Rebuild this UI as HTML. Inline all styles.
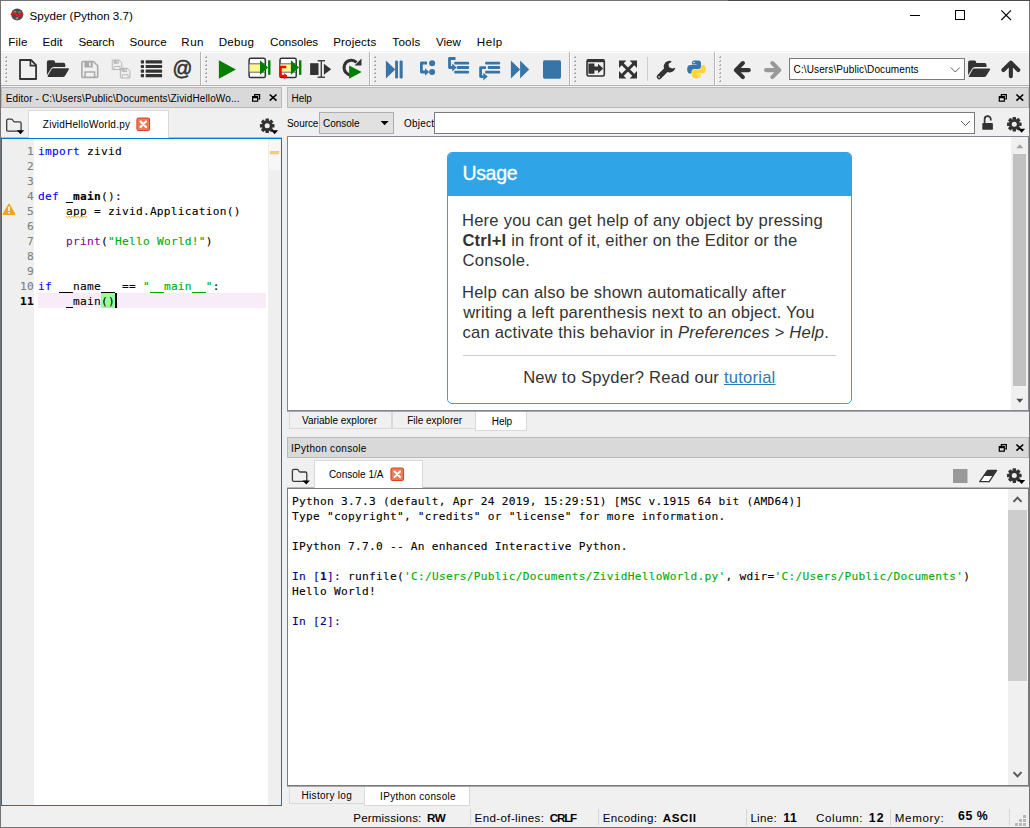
<!DOCTYPE html>
<html><head><meta charset="utf-8"><title>Spyder (Python 3.7)</title>
<style>
*{box-sizing:border-box;margin:0;padding:0}
html,body{width:1030px;height:828px;overflow:hidden;background:#f0f0f0}
body{position:relative;font-family:"Liberation Sans",sans-serif;font-size:12px;color:#000}
div,span,svg{position:absolute}
b,i,u{font-weight:normal;font-style:normal}
.t{white-space:pre;line-height:16px;height:16px;font-size:11.6px}
.s{white-space:pre;line-height:14px;height:14px;font-size:10px}
.h{white-space:pre;line-height:20px;height:20px;font-size:16.6px}
#win{left:0;top:0;width:1030px;height:828px;border:1px solid #737373;background:#f0f0f0}
#titlebar{left:1px;top:1px;width:1028px;height:30px;background:#fff}
#menubar{left:1px;top:31px;width:1028px;height:21px;background:#fff}
.dock{height:21px;background:#d9d9d9;border:1px solid #bababa}
.frame{background:#fff;border:1px solid #828790}
.tab{background:#f0f0f0;border:1px solid #d9d9d9;border-top:none;height:17px}
.tabsel{background:#fff;border:1px solid #d9d9d9;border-bottom:none}
.mono{-webkit-text-stroke:0.1px currentColor;font-family:"DejaVu Sans Mono","Liberation Mono",monospace;font-size:11.2px;letter-spacing:0.257px;line-height:15px;height:15px;white-space:pre}
.ln{color:#808080;text-align:right;width:28px;left:6px}
.kw{color:#0000ff}.st{color:#00aa00}.bi{color:#900090}.pr{color:#000080}
</style></head>
<body>
<div id="win"></div>
<div id="titlebar"></div>
<div id="menubar"></div>
<span class="t" style="left:29.6px;top:8px;letter-spacing:0.006px;">Spyder (Python 3.7)</span><span class="t" style="left:8.3px;top:34px;letter-spacing:0.150px;">File</span><span class="t" style="left:42.4px;top:34px;letter-spacing:0.067px;">Edit</span><span class="t" style="left:78.5px;top:34px;letter-spacing:-0.180px;">Search</span><span class="t" style="left:129.5px;top:34px;letter-spacing:0.090px;">Source</span><span class="t" style="left:181.3px;top:34px;letter-spacing:0.500px;">Run</span><span class="t" style="left:218.7px;top:34px;letter-spacing:0.275px;">Debug</span><span class="t" style="left:270.1px;top:34px;letter-spacing:-0.043px;">Consoles</span><span class="t" style="left:333.2px;top:34px;letter-spacing:0.171px;">Projects</span><span class="t" style="left:392.35px;top:34px;letter-spacing:0.250px;">Tools</span><span class="t" style="left:436px;top:34px;letter-spacing:0.000px;">View</span><span class="t" style="left:476.7px;top:34px;letter-spacing:0.583px;">Help</span>
<div style="left:1px;top:51px;width:1028px;height:1px;background:#f2f2f2"></div><div style="left:1px;top:52px;width:1028px;height:1px;background:#fff"></div>
<div style="left:1px;top:85px;width:1028px;height:1px;background:#b4b4b4"></div>
<span class="t" style="left:172.55px;top:55.3px;-webkit-text-stroke:0.55px #333;font-size:19.6px;line-height:26px;height:26px;color:#333;">@</span><div style="left:789px;top:58px;width:176px;height:22px;background:#fff;border:1px solid #7a7a7a"></div><span class="s" style="left:793.6px;top:63px;letter-spacing:0.112px;">C:\Users\Public\Documents</span>

<div class="dock" style="left:1px;top:87px;width:281px"></div>
<span class="s" style="left:5.75px;top:92px;letter-spacing:0.137px;">Editor - C:\Users\Public\Documents\ZividHelloWo...</span>
<div style="left:1px;top:137px;width:281px;height:1px;background:#b8b8b8"></div>
<div class="tabsel" style="left:28px;top:110px;width:141px;height:28px"></div>
<span class="s" style="left:42.85px;top:118px;letter-spacing:0.232px;">ZividHelloWorld.py</span>
<div id="editor" style="left:1px;top:138px;width:281px;height:668px;background:#fff;border:1px solid #0078d7">
  <div style="left:0;top:0;width:32px;height:666px;background:#efefef"></div>
  <div style="left:266px;top:0;width:13px;height:666px;background:#efefef"></div>
</div>
<div style="left:38px;top:293px;width:228px;height:15px;background:#f7ecf8"></div>
<div style="left:101px;top:293px;width:14px;height:15px;background:#99ff99"></div>
<div style="left:115px;top:293px;width:2px;height:15px;background:#000"></div>
<span class="mono ln" style="top:144px">1</span><span class="mono ln" style="top:159px">2</span><span class="mono ln" style="top:174px">3</span><span class="mono ln" style="top:189px">4</span><span class="mono ln" style="top:204px">5</span><span class="mono ln" style="top:219px">6</span><span class="mono ln" style="top:234px">7</span><span class="mono ln" style="top:249px">8</span><span class="mono ln" style="top:264px">9</span><span class="mono ln" style="top:279px">10</span><span class="mono ln" style="top:294px;color:#000;font-weight:bold">11</span><span class="mono" style="left:38px;top:144px"><b class="kw">import</b> zivid</span><span class="mono" style="left:38px;top:189px"><b class="kw">def</b> <b style="font-weight:bold">_main</b>():</span><span class="mono" style="left:38px;top:204px">    app = zivid.Application()</span><span class="mono" style="left:38px;top:234px">    <b class="bi">print</b>(<b class="st">"Hello World!"</b>)</span><span class="mono" style="left:38px;top:279px"><b class="kw">if</b> __name__ == <b class="st">"__main__"</b>:</span><span class="mono" style="left:38px;top:294px">    _main()</span>

<div class="dock" style="left:287px;top:87px;width:742px"></div>
<span class="s" style="left:291.55px;top:92px;letter-spacing:-0.100px;">Help</span><span class="s" style="left:287px;top:117px;letter-spacing:-0.050px;">Source</span>
<div style="left:319px;top:112px;width:75px;height:22px;background:#e1e1e1;border:1px solid #adadad"></div>
<span class="s" style="left:323px;top:117px;letter-spacing:-0.042px;">Console</span><span class="s" style="left:404px;top:117px;letter-spacing:0.250px;">Object</span>
<div style="left:434px;top:112px;width:541px;height:22px;background:#fff;border:1px solid #7a7a7a"></div>
<div class="frame" style="left:287px;top:136px;width:742px;height:275px">
  <div style="left:723px;top:0;width:17px;height:273px;background:#f0f0f0"></div>
  <div style="left:725px;top:17px;width:13px;height:232px;background:#c1c1c1"></div>
</div>
<div id="usage" style="left:447px;top:152px;width:405px;height:252px;background:#fff;border:1px solid #2fa4e7;border-radius:5px;overflow:hidden">
  <div style="left:0;top:0;width:403px;height:43px;background:#2fa4e7"></div>
  <div style="left:15px;top:202px;width:373px;height:1px;background:#ccc"></div>
</div>
<span class="h" style="left:462.45px;top:161.3px;font-size:19.5px;line-height:24px;color:#fff;-webkit-text-stroke:0.3px #fff;letter-spacing:-0.325px;">Usage</span><span class="h" style="left:461.95px;top:211px;color:#333;letter-spacing:0.223px;">Here you can get help of any object by pressing</span><span class="h" style="left:462.45px;top:231px;color:#333;letter-spacing:0.178px;"><b style="font-weight:bold">Ctrl+I</b> in front of it, either on the Editor or the</span><span class="h" style="left:462.45px;top:251px;color:#333;letter-spacing:0.293px;">Console.</span><span class="h" style="left:461.95px;top:283px;color:#333;letter-spacing:0.210px;">Help can also be shown automatically after</span><span class="h" style="left:463.2px;top:303px;color:#333;letter-spacing:0.188px;">writing a left parenthesis next to an object. You</span><span class="h" style="left:462.45px;top:323px;color:#333;letter-spacing:0.207px;">can activate this behavior in <i style="font-style:italic">Preferences &gt; Help</i>.</span><span class="h" style="left:523.15px;top:368px;color:#333;letter-spacing:0.219px;">New to Spyder? Read our <u style="color:#2d7ab5">tutorial</u></span>
<div style="left:287px;top:411px;width:742px;height:1px;background:#a6a6a6"></div>
<div style="left:287px;top:786px;width:742px;height:1px;background:#a6a6a6"></div>
<div style="left:728px;top:0;width:302px;height:1px;background:#4a4a4a"></div>
<div class="tab" style="left:289px;top:412px;width:103px"></div>
<div class="tab" style="left:392px;top:412px;width:85px"></div>
<div class="tabsel" style="left:475px;top:412px;width:52px;height:19px;border:1px solid #d9d9d9;border-top:none"></div>
<span class="s" style="left:301.95px;top:414px;letter-spacing:0.012px;">Variable explorer</span><span class="s" style="left:407.25px;top:414px;letter-spacing:-0.017px;">File explorer</span><span class="s" style="left:491.85px;top:415px;letter-spacing:-0.100px;">Help</span>

<div class="dock" style="left:287px;top:437px;width:742px"></div>
<span class="s" style="left:291px;top:442px;letter-spacing:0.304px;">IPython console</span>
<div style="left:287px;top:487px;width:742px;height:1px;background:#b8b8b8"></div>
<div class="frame" style="left:287px;top:488px;width:742px;height:298px;border-color:#7a7a7a">
  <div style="left:720px;top:0;width:20px;height:296px;background:#f0f0f0"></div>
  <div style="left:720px;top:21px;width:19px;height:171px;background:#cdcdcd"></div>
</div>
<div class="tabsel" style="left:314px;top:460px;width:109px;height:28px"></div>
<span class="s" style="left:328.9px;top:468px;letter-spacing:0.010px;">Console 1/A</span><span class="mono" style="left:292px;top:494px">Python 3.7.3 (default, Apr 24 2019, 15:29:51) [MSC v.1915 64 bit (AMD64)]</span><span class="mono" style="left:292px;top:509px">Type "copyright", "credits" or "license" for more information.</span><span class="mono" style="left:292px;top:539px">IPython 7.7.0 -- An enhanced Interactive Python.</span><span class="mono" style="left:292px;top:569px"><b class="pr">In [</b><b class="pr" style="font-weight:bold">1</b><b class="pr">]:</b> runfile(<b class="st">'C:/Users/Public/Documents/ZividHelloWorld.py'</b>, wdir=<b class="st">'C:/Users/Public/Documents'</b>)</span><span class="mono" style="left:292px;top:584px">Hello World!</span><span class="mono" style="left:292px;top:614px"><b class="pr">In [</b><b class="pr">2</b><b class="pr">]:</b> </span>
<svg width="1030" height="828" viewBox="0 0 1030 828" style="left:0;top:0"><circle cx="17.2" cy="14.6" r="6" fill="#4a4a4a"/><circle cx="15" cy="12" r="1.3" fill="#8a8a8a"/><circle cx="19.6" cy="12.2" r="1.2" fill="#777"/><circle cx="17" cy="18.3" r="1.4" fill="#888"/><path d="M11.3,15 Q13.5,12 16,14.3 T19.5,15.6 T23,13.2" fill="none" stroke="#ee1111" stroke-width="2.2"/><rect x="910" y="15" width="10" height="1" fill="#000"/><rect x="955.5" y="10.5" width="9" height="9" fill="none" stroke="#000" stroke-width="1"/><path d="M1001.3,10.3 L1011,20 M1011,10.3 L1001.3,20" stroke="#000" stroke-width="1.1" fill="none"/><rect x="6" y="56" width="1" height="1" fill="#b4b4b4"/><rect x="5" y="57" width="2" height="1" fill="#a8a8a8"/><rect x="6" y="60" width="1" height="1" fill="#b4b4b4"/><rect x="5" y="61" width="2" height="1" fill="#a8a8a8"/><rect x="6" y="64" width="1" height="1" fill="#b4b4b4"/><rect x="5" y="65" width="2" height="1" fill="#a8a8a8"/><rect x="6" y="68" width="1" height="1" fill="#b4b4b4"/><rect x="5" y="69" width="2" height="1" fill="#a8a8a8"/><rect x="6" y="72" width="1" height="1" fill="#b4b4b4"/><rect x="5" y="73" width="2" height="1" fill="#a8a8a8"/><rect x="6" y="76" width="1" height="1" fill="#b4b4b4"/><rect x="5" y="77" width="2" height="1" fill="#a8a8a8"/><rect x="6" y="80" width="1" height="1" fill="#b4b4b4"/><rect x="5" y="81" width="2" height="1" fill="#a8a8a8"/><rect x="206" y="56" width="1" height="1" fill="#b4b4b4"/><rect x="205" y="57" width="2" height="1" fill="#a8a8a8"/><rect x="206" y="60" width="1" height="1" fill="#b4b4b4"/><rect x="205" y="61" width="2" height="1" fill="#a8a8a8"/><rect x="206" y="64" width="1" height="1" fill="#b4b4b4"/><rect x="205" y="65" width="2" height="1" fill="#a8a8a8"/><rect x="206" y="68" width="1" height="1" fill="#b4b4b4"/><rect x="205" y="69" width="2" height="1" fill="#a8a8a8"/><rect x="206" y="72" width="1" height="1" fill="#b4b4b4"/><rect x="205" y="73" width="2" height="1" fill="#a8a8a8"/><rect x="206" y="76" width="1" height="1" fill="#b4b4b4"/><rect x="205" y="77" width="2" height="1" fill="#a8a8a8"/><rect x="206" y="80" width="1" height="1" fill="#b4b4b4"/><rect x="205" y="81" width="2" height="1" fill="#a8a8a8"/><rect x="375" y="56" width="1" height="1" fill="#b4b4b4"/><rect x="374" y="57" width="2" height="1" fill="#a8a8a8"/><rect x="375" y="60" width="1" height="1" fill="#b4b4b4"/><rect x="374" y="61" width="2" height="1" fill="#a8a8a8"/><rect x="375" y="64" width="1" height="1" fill="#b4b4b4"/><rect x="374" y="65" width="2" height="1" fill="#a8a8a8"/><rect x="375" y="68" width="1" height="1" fill="#b4b4b4"/><rect x="374" y="69" width="2" height="1" fill="#a8a8a8"/><rect x="375" y="72" width="1" height="1" fill="#b4b4b4"/><rect x="374" y="73" width="2" height="1" fill="#a8a8a8"/><rect x="375" y="76" width="1" height="1" fill="#b4b4b4"/><rect x="374" y="77" width="2" height="1" fill="#a8a8a8"/><rect x="375" y="80" width="1" height="1" fill="#b4b4b4"/><rect x="374" y="81" width="2" height="1" fill="#a8a8a8"/><rect x="575" y="56" width="1" height="1" fill="#b4b4b4"/><rect x="574" y="57" width="2" height="1" fill="#a8a8a8"/><rect x="575" y="60" width="1" height="1" fill="#b4b4b4"/><rect x="574" y="61" width="2" height="1" fill="#a8a8a8"/><rect x="575" y="64" width="1" height="1" fill="#b4b4b4"/><rect x="574" y="65" width="2" height="1" fill="#a8a8a8"/><rect x="575" y="68" width="1" height="1" fill="#b4b4b4"/><rect x="574" y="69" width="2" height="1" fill="#a8a8a8"/><rect x="575" y="72" width="1" height="1" fill="#b4b4b4"/><rect x="574" y="73" width="2" height="1" fill="#a8a8a8"/><rect x="575" y="76" width="1" height="1" fill="#b4b4b4"/><rect x="574" y="77" width="2" height="1" fill="#a8a8a8"/><rect x="575" y="80" width="1" height="1" fill="#b4b4b4"/><rect x="574" y="81" width="2" height="1" fill="#a8a8a8"/><rect x="720" y="56" width="1" height="1" fill="#b4b4b4"/><rect x="719" y="57" width="2" height="1" fill="#a8a8a8"/><rect x="720" y="60" width="1" height="1" fill="#b4b4b4"/><rect x="719" y="61" width="2" height="1" fill="#a8a8a8"/><rect x="720" y="64" width="1" height="1" fill="#b4b4b4"/><rect x="719" y="65" width="2" height="1" fill="#a8a8a8"/><rect x="720" y="68" width="1" height="1" fill="#b4b4b4"/><rect x="719" y="69" width="2" height="1" fill="#a8a8a8"/><rect x="720" y="72" width="1" height="1" fill="#b4b4b4"/><rect x="719" y="73" width="2" height="1" fill="#a8a8a8"/><rect x="720" y="76" width="1" height="1" fill="#b4b4b4"/><rect x="719" y="77" width="2" height="1" fill="#a8a8a8"/><rect x="720" y="80" width="1" height="1" fill="#b4b4b4"/><rect x="719" y="81" width="2" height="1" fill="#a8a8a8"/><rect x="200" y="52" width="1" height="33" fill="#b4b4b4"/><rect x="201" y="52" width="1" height="33" fill="#ffffff"/><rect x="369" y="52" width="1" height="33" fill="#b4b4b4"/><rect x="370" y="52" width="1" height="33" fill="#ffffff"/><rect x="569" y="52" width="1" height="33" fill="#b4b4b4"/><rect x="570" y="52" width="1" height="33" fill="#ffffff"/><rect x="714" y="52" width="1" height="33" fill="#b4b4b4"/><rect x="715" y="52" width="1" height="33" fill="#ffffff"/><path d="M20,60 H31 L36.1,65.1 V79 H20 Z" fill="none" stroke="#333333" stroke-width="1.8" stroke-linejoin="round"/><path d="M30.4,60.4 V65.6 H35.8" fill="none" stroke="#333333" stroke-width="1.6"/><g transform="translate(46.9,60.3)" fill="#333333">
<path d="M0,1.8 Q0,0 1.8,0 H6.3 Q8.1,0 8.1,1.8 V2.5 H16.6 Q18.4,2.5 18.4,4.3 V6.6 H6.8 Q5.1,6.6 4.1,8.2 L0,14.9 Z"/>
<path d="M6.3,8 H21.3 Q22.7,8 21.9,9.3 L18.2,15.4 Q17.4,16.7 15.8,16.7 H1.6 Q0.2,16.7 0.9,15.5 L4.5,9.1 Q5.1,8 6.3,8 Z"/>
</g><g transform="translate(81.1,60.7) scale(1.0)" fill="none" stroke="#aaaaaa" stroke-width="1.6" stroke-linejoin="round">
<path d="M1.6,0.8 H12.3 L16.6,5.1 V15.9 Q16.6,16.7 15.8,16.7 H1.6 Q0.8,16.7 0.8,15.9 V1.6 Q0.8,0.8 1.6,0.8 Z"/>
<path d="M3.9,16.4 V11.3 H13.5 V16.4" stroke-width="1.5"/>
<path d="M3.9,1 V6.2 H11 V1" fill="#aaaaaa" stroke-width="1.2"/>
<rect x="7.9" y="1.9" width="1.7" height="3.3" fill="#f0f0f0" stroke="none"/>
</g><g transform="translate(111.8,59.6) scale(0.6)" fill="none" stroke="#b4b4b4" stroke-width="1.6" stroke-linejoin="round">
<path d="M1.6,0.8 H12.3 L16.6,5.1 V15.9 Q16.6,16.7 15.8,16.7 H1.6 Q0.8,16.7 0.8,15.9 V1.6 Q0.8,0.8 1.6,0.8 Z"/>
<path d="M3.9,16.4 V11.3 H13.5 V16.4" stroke-width="1.5"/>
<path d="M3.9,1 V6.2 H11 V1" fill="#b4b4b4" stroke-width="1.2"/>
<rect x="7.9" y="1.9" width="1.7" height="3.3" fill="#f0f0f0" stroke="none"/>
</g><g transform="translate(119.9,67.8) scale(0.61)" fill="none" stroke="#b4b4b4" stroke-width="1.6" stroke-linejoin="round">
<path d="M1.6,0.8 H12.3 L16.6,5.1 V15.9 Q16.6,16.7 15.8,16.7 H1.6 Q0.8,16.7 0.8,15.9 V1.6 Q0.8,0.8 1.6,0.8 Z"/>
<path d="M3.9,16.4 V11.3 H13.5 V16.4" stroke-width="1.5"/>
<path d="M3.9,1 V6.2 H11 V1" fill="#b4b4b4" stroke-width="1.2"/>
<rect x="7.9" y="1.9" width="1.7" height="3.3" fill="#f0f0f0" stroke="none"/>
</g><rect x="140.8" y="60.3" width="3.2" height="3.2" rx="0.5" fill="#333333"/><rect x="145.6" y="60.3" width="16.5" height="3.2" rx="0.6" fill="#333333"/><rect x="140.8" y="64.9" width="3.2" height="3.2" rx="0.5" fill="#333333"/><rect x="145.6" y="64.9" width="16.5" height="3.2" rx="0.6" fill="#333333"/><rect x="140.8" y="69.5" width="3.2" height="3.2" rx="0.5" fill="#333333"/><rect x="145.6" y="69.5" width="16.5" height="3.2" rx="0.6" fill="#333333"/><rect x="140.8" y="74.1" width="3.2" height="3.2" rx="0.5" fill="#333333"/><rect x="145.6" y="74.1" width="16.5" height="3.2" rx="0.6" fill="#333333"/><path d="M218.9,60.3 L235.9,69.5 L218.9,78.7 Z" fill="#008000"/><rect x="249.10000000000002" y="58.3" width="16.2" height="19.2" rx="1.6" fill="#ffffff" stroke="#333333" stroke-width="1.5"/>
<rect x="249.5" y="63.9" width="15" height="8.2" fill="#fff68f"/><path d="M249.10000000000002,63.8 h16.2 M249.10000000000002,72.2 h16.2" stroke="#666" stroke-width="1"/>
<path d="M260.0,60.3 L268.1,67.5 L260.0,74.8 Z" fill="#008000"/>
<rect x="268.1" y="60.3" width="2.4" height="14.5" fill="#008000"/><rect x="280.0" y="58.3" width="16.2" height="19.2" rx="1.6" fill="#ffffff" stroke="#333333" stroke-width="1.5"/>
<rect x="280.4" y="63.9" width="15" height="8.2" fill="#fff68f"/><path d="M280.0,63.8 h16.2 M280.0,72.2 h16.2" stroke="#666" stroke-width="1"/>
<path d="M290.9,60.3 L299.0,67.5 L290.9,74.8 Z" fill="#008000"/>
<rect x="299.0" y="60.3" width="2.4" height="14.5" fill="#008000"/><path d="M286.3,67 H280.6 V76 H284.6" fill="none" stroke="#ff0000" stroke-width="2.4"/><path d="M284.2,72.9 L287.6,76 L284.2,79.2 Z" fill="#ff0000"/><rect x="310.1" y="63.2" width="8.4" height="11.8" fill="#333333"/><path d="M317.6,60.8 H325 M317.6,77.2 H325 M321.3,60.8 V77.2" stroke="#444" stroke-width="1.4" fill="none"/><path d="M323.9,63.7 L331.2,69.2 L323.9,74.8 Z" fill="#333333"/><path d="M356.5,62.4 A7.3,7.3 0 1 0 352.6,74.8" fill="none" stroke="#333333" stroke-width="3"/><path d="M361.5,58.6 V65.6 H354.5 Z" fill="#333333"/><path d="M349.1,65.6 L361.7,72.1 L349.1,78.7 Z" fill="#008000"/><path d="M385.9,60.5 L395.3,69.4 L385.9,78.4 Z" fill="#3775a9"/><rect x="395.1" y="60.5" width="2.9" height="17.9" rx="1.2" fill="#3775a9"/><rect x="399.6" y="60.5" width="3.1" height="17.9" rx="1.2" fill="#3775a9"/><path d="M427,63 H421.4 V72 H425.5" fill="none" stroke="#3775a9" stroke-width="2.8" stroke-linejoin="round"/><path d="M425,68.2 L429.2,72 L425,75.8 Z" fill="#3775a9"/><circle cx="432.1" cy="63.2" r="3" fill="#3775a9"/><circle cx="432.1" cy="72.1" r="3" fill="#3775a9"/><rect x="454.2" y="61.7" width="14.9" height="2.9" rx="1" fill="#3775a9"/><rect x="485.1" y="61.7" width="15.1" height="2.9" rx="1" fill="#3775a9"/><rect x="456.8" y="66.1" width="12.3" height="2.9" rx="1" fill="#3775a9"/><rect x="487.70000000000005" y="66.1" width="12.5" height="2.9" rx="1" fill="#3775a9"/><rect x="454.2" y="70.7" width="14.9" height="2.9" rx="1" fill="#3775a9"/><rect x="485.1" y="70.7" width="15.1" height="2.9" rx="1" fill="#3775a9"/><path d="M455.5,58.5 H449.5 V67.5 H452.6" fill="none" stroke="#3775a9" stroke-width="2.8" stroke-linejoin="round"/><path d="M452.2,63.6 L456.6,67.5 L452.2,71.4 Z" fill="#3775a9"/><path d="M486,67.6 H480.6 V76.6 H483.7" fill="none" stroke="#3775a9" stroke-width="2.8" stroke-linejoin="round"/><path d="M483.3,72.8 L487.7,76.6 L483.3,80.4 Z" fill="#3775a9"/><path d="M510.9,60.5 L520.1,69.4 L510.9,78.4 Z M520.1,60.5 L529.2,69.4 L520.1,78.4 Z" fill="#3775a9"/><rect x="543" y="60.3" width="18" height="18.4" rx="1.6" fill="#3775a9"/><rect x="587" y="59.9" width="17.3" height="16.1" rx="1.6" fill="none" stroke="#333333" stroke-width="1.6"/><rect x="587" y="59.6" width="17.3" height="2.6" fill="#333333"/><path d="M588.4,63.4 H594.4 V66.6 H598 V63.7 L603.3,68.5 L598,73.3 V70.4 H594.4 V73.8 H588.4 Z" fill="#333333"/><path d="M622,63.5 L634,75.5 M634,63.5 L622,75.5" stroke="#333333" stroke-width="3" fill="none"/><path d="M619,60.5 H626.4 L619,67.9 Z M637,60.5 V67.9 L629.6,60.5 Z M619,78.5 V71.1 L626.4,78.5 Z M637,78.5 H629.6 L637,71.1 Z" fill="#333333"/><rect x="647" y="57" width="1" height="24" fill="#cccccc"/><path d="M659.2,76.8 L667.5,68.5" stroke="#333333" stroke-width="5" stroke-linecap="round" fill="none"/><circle cx="669.6" cy="66.6" r="5.9" fill="#333333"/><path d="M669.3,66.9 L672.5,58.5 L680,62 L677.5,67.5 L672,68.5 Z" fill="#f0f0f0"/><circle cx="671.2" cy="65" r="2.6" fill="#f0f0f0"/><circle cx="659.1" cy="76.9" r="0.8" fill="#f0f0f0"/><g transform="translate(687.2,60.4) scale(0.1675,0.159)"><path d="M54.918785,0.00091927421 C50.335132,0.02221727 45.957846,0.41313697 42.106285,1.0946693 30.760069,3.0991731 28.700036,7.2947714 28.700035,15.032169 L28.700035,25.250919 55.512535,25.250919 55.512535,28.657169 28.700035,28.657169 18.637535,28.657169 C10.845076,28.657169 4.0217762,33.340886 1.8875352,42.250919 -0.57428478,52.463885 -0.68347988,58.836942 1.8875352,69.500919 3.7934635,77.438771 8.3450784,83.094669 16.137535,83.094669 L25.356285,83.094669 25.356285,70.844669 C25.356285,61.994767 33.013429,54.188419 42.106285,54.188419 L68.887535,54.188419 C76.342486,54.188419 82.293785,48.050255 82.293785,40.563419 L82.293785,15.032169 C82.293785,7.7658304 76.163798,2.3073919 68.887535,1.0946693 64.281548,0.32794397 59.502438,-0.02037903 54.918785,0.00091927421 Z M40.418785,8.2196693 C43.188334,8.2196693 45.450035,10.518375 45.450035,13.344669 45.450033,16.160961 43.188334,18.438419 40.418785,18.438419 37.639307,18.438419 35.387535,16.160961 35.387535,13.344669 35.387533,10.518375 37.639307,8.2196693 40.418785,8.2196693 Z" fill="#3776ab"/><path d="M85.637535,28.657169 L85.637535,40.563419 C85.637535,49.794129 77.811612,57.563418 68.887535,57.563419 L42.106285,57.563419 C34.770459,57.563419 28.700035,63.841925 28.700035,71.188419 L28.700035,96.719669 C28.700035,103.98601 35.018606,108.25996 42.106285,110.34467 50.593546,112.84027 58.732446,113.29129 68.887535,110.34467 75.637611,108.3903 82.293785,104.4571 82.293785,96.719669 L82.293785,86.500919 55.512535,86.500919 55.512535,83.094669 82.293785,83.094669 95.700035,83.094669 C103.49249,83.094669 106.39622,77.659241 109.10628,69.500919 111.90564,61.101926 111.78651,53.024934 109.10628,42.250919 107.18047,34.493284 103.50236,28.657169 95.700035,28.657169 L85.637535,28.657169 Z M70.575035,93.313419 C73.354513,93.313419 75.606285,95.590877 75.606285,98.407169 75.606283,101.23346 73.354513,103.53242 70.575035,103.53242 67.805485,103.53242 65.543785,101.23346 65.543785,98.407169 65.543787,95.590877 67.805485,93.313419 70.575035,93.313419 Z" fill="#ffd43b"/></g><path d="M736,70.1 H748.8 M742.9,63.05 L735.85,70.1 L742.9,77.15" stroke="#333333" stroke-width="4.1" stroke-linecap="round" stroke-linejoin="round" fill="none"/><path d="M779.2,70.1 H766.05 M772.3,63.05 L779.35,70.1 L772.3,77.15" stroke="#999999" stroke-width="4.1" stroke-linecap="round" stroke-linejoin="round" fill="none"/><path d="M950.8,67.5 L955.3,72 L959.8,67.5" fill="none" stroke="#555" stroke-width="0.95"/><g transform="translate(968.1,60.4)" fill="#333333">
<path d="M0,1.8 Q0,0 1.8,0 H6.3 Q8.1,0 8.1,1.8 V2.5 H16.6 Q18.4,2.5 18.4,4.3 V6.6 H6.8 Q5.1,6.6 4.1,8.2 L0,14.9 Z"/>
<path d="M6.3,8 H21.3 Q22.7,8 21.9,9.3 L18.2,15.4 Q17.4,16.7 15.8,16.7 H1.6 Q0.2,16.7 0.9,15.5 L4.5,9.1 Q5.1,8 6.3,8 Z"/>
</g><path d="M1010.85,63 V76.25 M1003.45,70.05 L1010.85,62.65 L1018.25,70.05" stroke="#333333" stroke-width="4.1" stroke-linecap="round" stroke-linejoin="round" fill="none"/><g fill="none" stroke="#000" stroke-width="1.2">
<path d="M254.6,96.4 V94.6 H259.6 V99 H257.6"/>
<rect x="252.6" y="96.6" width="5" height="4.6"/>
<path d="M252.6,97.4 h5" stroke-width="1.6"/>
<path d="M269.7,94.5 l6.8,6.2 M276.5,94.5 l-6.8,6.2" stroke-width="1.65"/>
</g><g fill="none" stroke="#000" stroke-width="1.2">
<path d="M1001.3000000000001,96.4 V94.6 H1006.3000000000001 V99 H1004.3000000000001"/>
<rect x="999.3000000000001" y="96.6" width="5" height="4.6"/>
<path d="M999.3000000000001,97.4 h5" stroke-width="1.6"/>
<path d="M1016.4000000000001,94.5 l6.8,6.2 M1023.2,94.5 l-6.8,6.2" stroke-width="1.65"/>
</g><g fill="none" stroke="#000" stroke-width="1.2">
<path d="M1001.3000000000001,446.4 V444.6 H1006.3000000000001 V449 H1004.3000000000001"/>
<rect x="999.3000000000001" y="446.6" width="5" height="4.6"/>
<path d="M999.3000000000001,447.4 h5" stroke-width="1.6"/>
<path d="M1016.4000000000001,444.5 l6.8,6.2 M1023.2,444.5 l-6.8,6.2" stroke-width="1.65"/>
</g><path d="M6.7,120.7 Q6.7,119.2 8.2,119.2 H11.4 Q12.5,119.2 12.9,120.4 Q13.4,121.80000000000001 14.6,121.80000000000001 H19.6 Q21.1,121.80000000000001 21.1,123.30000000000001 V129.70000000000002 Q21.1,131.20000000000002 19.6,131.20000000000002 H8.2 Q6.7,131.20000000000002 6.7,129.70000000000002 Z" fill="none" stroke="#3a3a3a" stroke-width="1.3"/>
<path d="M16.8,130.20000000000002 h7.4 l-3.7,4 z" fill="#000"/><path d="M292.4,470.90000000000003 Q292.4,469.40000000000003 293.9,469.40000000000003 H297.09999999999997 Q298.2,469.40000000000003 298.59999999999997,470.6 Q299.09999999999997,472.0 300.3,472.0 H305.3 Q306.8,472.0 306.8,473.5 V479.90000000000003 Q306.8,481.40000000000003 305.3,481.40000000000003 H293.9 Q292.4,481.40000000000003 292.4,479.90000000000003 Z" fill="none" stroke="#3a3a3a" stroke-width="1.3"/>
<path d="M302.5,480.40000000000003 h7.4 l-3.7,4 z" fill="#000"/><rect x="136.95" y="117.95" width="12.6" height="12.6" rx="1.8" fill="#e57f58" stroke="#d9432b" stroke-width="1.1"/>
<path d="M140.5,121.5 l5.5,5.5 M146.0,121.5 l-5.5,5.5" stroke="#ffffff" stroke-width="2" stroke-linecap="round" fill="none"/><rect x="390.95" y="467.95" width="12.6" height="12.6" rx="1.8" fill="#e57f58" stroke="#d9432b" stroke-width="1.1"/>
<path d="M394.5,471.5 l5.5,5.5 M400.0,471.5 l-5.5,5.5" stroke="#ffffff" stroke-width="2" stroke-linecap="round" fill="none"/><g fill="#333333"><circle cx="267.2" cy="125.8" r="5.40"/><rect x="265.45" y="118.50" width="3.50" height="3.65" rx="0.6" transform="rotate(0 267.2 125.8)"/><rect x="265.45" y="118.50" width="3.50" height="3.65" rx="0.6" transform="rotate(45 267.2 125.8)"/><rect x="265.45" y="118.50" width="3.50" height="3.65" rx="0.6" transform="rotate(90 267.2 125.8)"/><rect x="265.45" y="118.50" width="3.50" height="3.65" rx="0.6" transform="rotate(135 267.2 125.8)"/><rect x="265.45" y="118.50" width="3.50" height="3.65" rx="0.6" transform="rotate(180 267.2 125.8)"/><rect x="265.45" y="118.50" width="3.50" height="3.65" rx="0.6" transform="rotate(225 267.2 125.8)"/><rect x="265.45" y="118.50" width="3.50" height="3.65" rx="0.6" transform="rotate(270 267.2 125.8)"/><rect x="265.45" y="118.50" width="3.50" height="3.65" rx="0.6" transform="rotate(315 267.2 125.8)"/><circle cx="267.2" cy="125.8" r="2.52" fill="#f0f0f0"/></g><path d="M271,130.2 h7.2 l-3.6,4.1 z" fill="#000"/><g fill="#333333"><circle cx="1014.3" cy="124.3" r="5.40"/><rect x="1012.55" y="117.00" width="3.50" height="3.65" rx="0.6" transform="rotate(0 1014.3 124.3)"/><rect x="1012.55" y="117.00" width="3.50" height="3.65" rx="0.6" transform="rotate(45 1014.3 124.3)"/><rect x="1012.55" y="117.00" width="3.50" height="3.65" rx="0.6" transform="rotate(90 1014.3 124.3)"/><rect x="1012.55" y="117.00" width="3.50" height="3.65" rx="0.6" transform="rotate(135 1014.3 124.3)"/><rect x="1012.55" y="117.00" width="3.50" height="3.65" rx="0.6" transform="rotate(180 1014.3 124.3)"/><rect x="1012.55" y="117.00" width="3.50" height="3.65" rx="0.6" transform="rotate(225 1014.3 124.3)"/><rect x="1012.55" y="117.00" width="3.50" height="3.65" rx="0.6" transform="rotate(270 1014.3 124.3)"/><rect x="1012.55" y="117.00" width="3.50" height="3.65" rx="0.6" transform="rotate(315 1014.3 124.3)"/><circle cx="1014.3" cy="124.3" r="2.52" fill="#f0f0f0"/></g><path d="M1018,128.7 h7.2 l-3.6,4.1 z" fill="#000"/><g fill="#333333"><circle cx="1014.3" cy="475.6" r="5.40"/><rect x="1012.55" y="468.30" width="3.50" height="3.65" rx="0.6" transform="rotate(0 1014.3 475.6)"/><rect x="1012.55" y="468.30" width="3.50" height="3.65" rx="0.6" transform="rotate(45 1014.3 475.6)"/><rect x="1012.55" y="468.30" width="3.50" height="3.65" rx="0.6" transform="rotate(90 1014.3 475.6)"/><rect x="1012.55" y="468.30" width="3.50" height="3.65" rx="0.6" transform="rotate(135 1014.3 475.6)"/><rect x="1012.55" y="468.30" width="3.50" height="3.65" rx="0.6" transform="rotate(180 1014.3 475.6)"/><rect x="1012.55" y="468.30" width="3.50" height="3.65" rx="0.6" transform="rotate(225 1014.3 475.6)"/><rect x="1012.55" y="468.30" width="3.50" height="3.65" rx="0.6" transform="rotate(270 1014.3 475.6)"/><rect x="1012.55" y="468.30" width="3.50" height="3.65" rx="0.6" transform="rotate(315 1014.3 475.6)"/><circle cx="1014.3" cy="475.6" r="2.52" fill="#f0f0f0"/></g><path d="M1018,480 h7.2 l-3.6,4.1 z" fill="#000"/><rect x="982.3" y="123" width="10.6" height="6.8" rx="0.9" fill="#333333"/><path d="M984.6,123.2 V119.3 A3.1,3.1 0 0 1 990.8,119.3 V120.4" fill="none" stroke="#333333" stroke-width="1.7"/><path d="M380.6,121 h8 l-4,4.2 z" fill="#000"/><path d="M961,121 L965.5,125.5 L970,121" fill="none" stroke="#555" stroke-width="0.95"/><rect x="953" y="469" width="14.5" height="14" fill="#999999"/><path d="M987.4,470.5 H996.6 L989.2,481.7 H979.8 Z" fill="#fff" stroke="#333333" stroke-width="1.3" stroke-linejoin="round"/><path d="M987.4,470.5 H996.6 L992.9,476.1 H983.6 Z" fill="#333333"/><path d="M9,204.5 L14.6,214.1 H3.4 Z" fill="#f7a21b" stroke="#f7a21b" stroke-width="1.6" stroke-linejoin="round"/><rect x="8.2" y="206.6" width="1.6" height="4.4" fill="#fff"/><rect x="8.2" y="211.9" width="1.6" height="1.6" fill="#fff"/><rect x="269" y="140" width="11" height="30" fill="#f7f7f7"/><rect x="270.2" y="151.3" width="8.6" height="2.6" fill="#f6cd76" stroke="#eec062" stroke-width="0.6"/><path d="M66,216.3 l1.5,1.3 l1.5,-1.3 l1.5,1.3 l1.5,-1.3 l1.5,1.3 l1.5,-1.3 l1.5,1.3 l1.5,-1.3 l1.5,1.3 l1.5,-1.3 l1.5,1.3 l1.5,-1.3 l1.5,1.3 l1.5,-1.3" fill="none" stroke="#f3ab35" stroke-width="1"/><rect x="66" y="202" width="7" height="1" fill="#000"/><rect x="59" y="292" width="7" height="1" fill="#000"/><rect x="66" y="292" width="7" height="1" fill="#000"/><rect x="101" y="292" width="7" height="1" fill="#000"/><rect x="108" y="292" width="7" height="1" fill="#000"/><rect x="150" y="292" width="7" height="1" fill="#00aa00"/><rect x="157" y="292" width="7" height="1" fill="#00aa00"/><rect x="192" y="292" width="7" height="1" fill="#00aa00"/><rect x="199" y="292" width="7" height="1" fill="#00aa00"/><rect x="66" y="307" width="7" height="1" fill="#000"/><path d="M1016.3,148.3 h7 l-3.5,-4 z" fill="#a0a0a0"/><path d="M1016.3,398.7 h7 l-3.5,4 z" fill="#505050"/><path d="M1013.5,501.9 L1017.5,497.6 L1021.5,501.9" fill="none" stroke="#555" stroke-width="1.9"/><path d="M1013.5,772.1 L1017.5,776.4 L1021.5,772.1" fill="none" stroke="#555" stroke-width="1.9"/><rect x="1023" y="815" width="3" height="3" fill="#b8b8b8"/><rect x="1019" y="819" width="3" height="3" fill="#b8b8b8"/><rect x="1023" y="819" width="3" height="3" fill="#b8b8b8"/><rect x="1015" y="823" width="3" height="3" fill="#b8b8b8"/><rect x="1019" y="823" width="3" height="3" fill="#b8b8b8"/><rect x="1023" y="823" width="3" height="3" fill="#b8b8b8"/></svg>
<div class="tab" style="left:289px;top:787px;width:77px"></div>
<div class="tabsel" style="left:364px;top:787px;width:106px;height:19px;border:1px solid #d9d9d9;border-top:none"></div>
<span class="s" style="left:301.55px;top:789px;letter-spacing:0.295px;">History log</span><span class="s" style="left:380.1px;top:790px;letter-spacing:0.311px;">IPython console</span><span class="t" style="left:353.3px;top:810px;letter-spacing:0.150px;">Permissions:</span><span class="t" style="left:426.95px;top:810px;font-weight:bold;letter-spacing:-0.250px;">RW</span><span class="t" style="left:474.6px;top:810px;letter-spacing:0.358px;">End-of-lines:</span><span class="t" style="left:549.8px;top:810px;font-weight:bold;letter-spacing:-1.167px;">CRLF</span><span class="t" style="left:602.7px;top:810px;letter-spacing:0.350px;">Encoding:</span><span class="t" style="left:662.85px;top:810px;font-weight:bold;letter-spacing:0.550px;">ASCII</span><span class="t" style="left:750.4px;top:810px;letter-spacing:0.275px;">Line:</span><span class="t" style="left:783.25px;top:810px;font-weight:bold;font-size:12.3px;letter-spacing:0.500px;">11</span><span class="t" style="left:816.1px;top:810px;letter-spacing:0.550px;">Column:</span><span class="t" style="left:868.85px;top:810px;font-weight:bold;font-size:12.3px;letter-spacing:1.100px;">12</span><span class="t" style="left:894.8px;top:810px;letter-spacing:0.650px;">Memory:</span><span class="t" style="left:958.1px;top:808px;font-weight:bold;font-size:12.3px;letter-spacing:0.550px;">65 %</span><div style="left:470px;top:809px;width:1px;height:16px;background:#d5d5d5"></div><div style="left:598px;top:809px;width:1px;height:16px;background:#d5d5d5"></div><div style="left:746px;top:809px;width:1px;height:16px;background:#d5d5d5"></div><div style="left:890px;top:809px;width:1px;height:16px;background:#d5d5d5"></div><div style="left:1009px;top:809px;width:1px;height:16px;background:#d5d5d5"></div>
</body></html>
